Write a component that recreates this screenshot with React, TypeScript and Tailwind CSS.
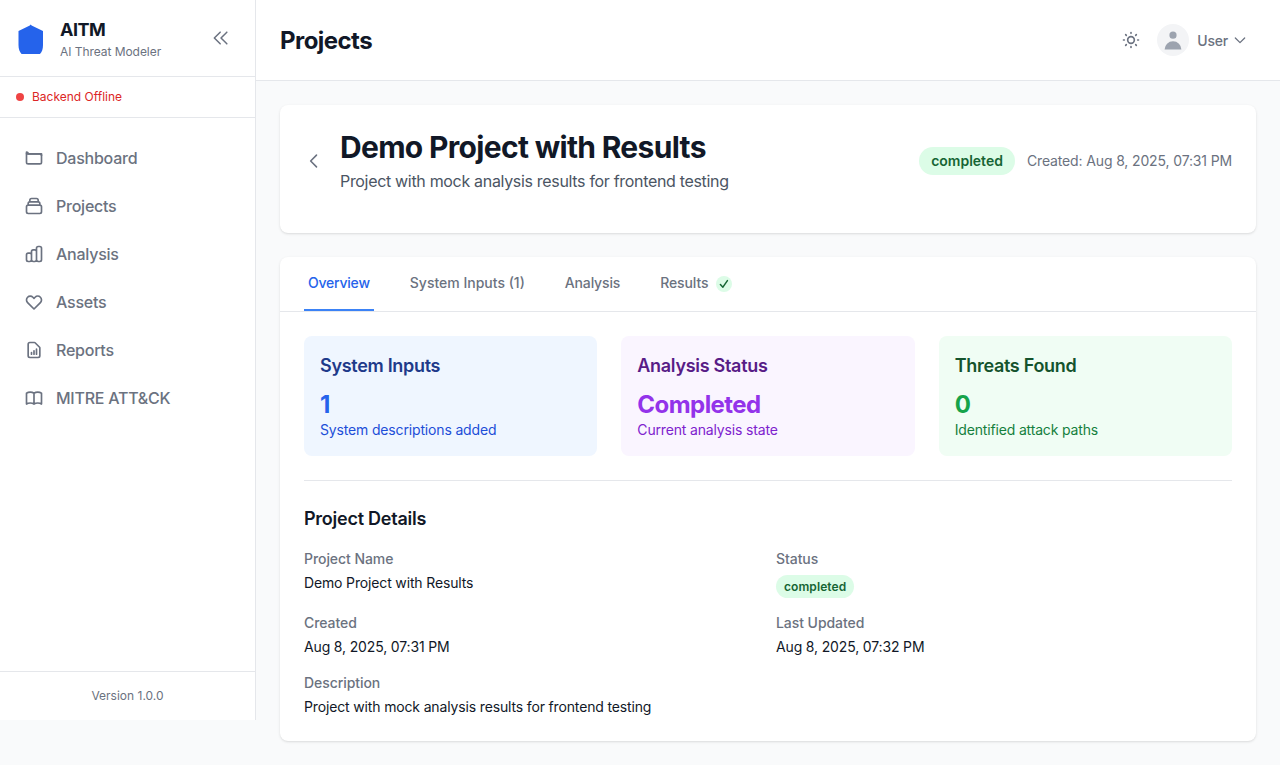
import React from "react";

type IconProps = { d: string | string[]; className?: string; strokeWidth?: number };

function Icon({ d, className = "size-5", strokeWidth = 2 }: IconProps) {
  const paths = Array.isArray(d) ? d : [d];
  return (
    <svg className={className} fill="none" stroke="currentColor" viewBox="0 0 24 24" strokeWidth={strokeWidth} strokeLinecap="round" strokeLinejoin="round">
      {paths.map((p) => (
        <path key={p} d={p} />
      ))}
    </svg>
  );
}

const nav: { label: string; d: string | string[] }[] = [
  {
    label: "Dashboard",
    d: ["M3 7v10a2 2 0 002 2h14a2 2 0 002-2V9a2 2 0 00-2-2H5a2 2 0 00-2-2z", "M3 7h18v2"],
  },
  {
    label: "Projects",
    d: "M19 11H5m14 0a2 2 0 012 2v6a2 2 0 01-2 2H5a2 2 0 01-2-2v-6a2 2 0 012-2m14 0V9a2 2 0 00-2-2M5 11V9a2 2 0 012-2m0 0V5a2 2 0 012-2h6a2 2 0 012 2v2M7 7h10",
  },
  {
    label: "Analysis",
    d: "M9 19v-6a2 2 0 00-2-2H5a2 2 0 00-2 2v6a2 2 0 002 2h2a2 2 0 002-2zm0 0V9a2 2 0 012-2h2a2 2 0 012 2v10m-6 0a2 2 0 002 2h2a2 2 0 002-2m0 0V5a2 2 0 012-2h2a2 2 0 012 2v14a2 2 0 01-2 2h-2a2 2 0 01-2-2z",
  },
  {
    label: "Assets",
    d: "M4.318 6.318a4.5 4.5 0 000 6.364L12 20.364l7.682-7.682a4.5 4.5 0 00-6.364-6.364L12 7.636l-1.318-1.318a4.5 4.5 0 00-6.364 0z",
  },
  {
    label: "Reports",
    d: "M9 17v-2m3 2v-4m3 4v-6m2 10H7a2 2 0 01-2-2V5a2 2 0 012-2h5.586a1 1 0 01.707.293l5.414 5.414a1 1 0 01.293.707V19a2 2 0 01-2 2z",
  },
  {
    label: "MITRE ATT&CK",
    d: "M12 6.253v13m0-13C10.832 5.477 9.246 5 7.5 5S4.168 5.477 3 6.253v13C4.168 18.477 5.754 18 7.5 18s3.332.477 4.5 1.253m0-13C13.168 5.477 14.754 5 16.5 5c1.747 0 3.332.477 4.5 1.253v13C19.832 18.477 18.247 18 16.5 18c-1.746 0-3.332.477-4.5 1.253",
  },
];

function Sidebar() {
  return (
    <aside className="flex h-[720px] w-64 shrink-0 flex-col border-r border-[#e5e7eb] bg-white">
      <div className="flex h-[77px] items-center justify-between border-b border-[#e5e7eb] pr-6 pl-4">
        <div className="flex items-center">
          <svg className="mt-1 mr-3 size-8 text-[#2563eb]" viewBox="0 0 32 32" fill="currentColor">
            <path d="M14.7 0.6 L15.6 1.4 L27 7 V21 C27 25 26 28 24 30 H5.6 C3.6 28 2.5 25 2.5 21 V7 L13.8 1.4 Z" />
          </svg>
          <div>
            <h1 className="text-lg leading-[28px] font-bold tracking-[-0.5px] text-[#111827]">AITM</h1>
            <p className="text-xs tracking-[-0.05px] text-[#6b7280]">AI Threat Modeler</p>
          </div>
        </div>
        <button className="text-[#6b7280]">
          <Icon strokeWidth={1.8} className="size-5" d="M11 19l-7-7 7-7m8 14l-7-7 7-7" />
        </button>
      </div>
      <div className="flex h-[41px] items-center gap-2 border-b border-[#e5e7eb] px-4">
        <span className="size-2 rounded-full bg-[#ef4444]" />
        <span className="text-xs text-[#dc2626]">Backend Offline</span>
      </div>
      <nav className="flex flex-1 flex-col gap-2 px-4 pt-5">
        {nav.map((n) => (
          <a key={n.label} className="flex h-10 items-center gap-3 px-2 font-medium tracking-[-0.24px] text-[#6b7280]">
            <Icon d={n.d} />
            {n.label}
          </a>
        ))}
      </nav>
      <div className="border-t border-[#e5e7eb] p-4 text-center text-xs text-[#6b7280]">Version 1.0.0</div>
    </aside>
  );
}

function Header() {
  return (
    <header className="flex h-[81px] items-center justify-between border-b border-[#e5e7eb] bg-white pr-8 pl-6">
      <h1 className="pt-0.5 text-2xl font-bold tracking-[-0.55px] text-[#111827]">Projects</h1>
      <div className="flex items-center text-[#6b7280]">
        <Icon className="mr-4 size-5" d="M12 3v1m0 16v1m9-9h-1M4 12H3m15.364 6.364l-.707-.707M6.343 6.343l-.707-.707m12.728 0l-.707.707M6.343 17.657l-.707.707M16 12a4 4 0 11-8 0 4 4 0 018 0z" />
        <span className="mr-2 flex size-8 items-center justify-center rounded-full bg-[#f3f4f6]">
          <svg className="size-6 text-[#9ca3af]" viewBox="0 0 20 20" fill="currentColor">
            <path fillRule="evenodd" d="M10 9a3 3 0 100-6 3 3 0 000 6zm-7 9a7 7 0 1114 0H3z" />
          </svg>
        </span>
        <span className="mr-1 pt-0.5 text-sm font-medium tracking-[-0.2px]">User</span>
        <Icon className="size-4" strokeWidth={1.9} d="M19 9l-7 7-7-7" />
      </div>
    </header>
  );
}

const stats = [
  { title: "System Inputs", value: "1", note: "System descriptions added", box: "bg-[#eff6ff]", t: "text-[#1e3a8a]", v: "text-[#2563eb]", n: "text-[#1d4ed8]" },
  { title: "Analysis Status", value: "Completed", note: "Current analysis state", box: "bg-[#faf5ff]", t: "text-[#581c87]", v: "text-[#9333ea]", n: "text-[#7e22ce]" },
  { title: "Threats Found", value: "0", note: "Identified attack paths", box: "bg-[#f0fdf4]", t: "text-[#14532d]", v: "text-[#16a34a]", n: "text-[#15803d]" },
];

function Field({ label, children }: { label: string; children: React.ReactNode }) {
  return (
    <div>
      <dt className="text-sm font-medium tracking-[-0.06px] text-[#6b7280]">{label}</dt>
      <dd className="mt-1 text-sm tracking-[-0.15px] text-[#111827]">{children}</dd>
    </div>
  );
}

export default function App() {
  return (
    <div className="flex min-h-[765px] bg-[#f9fafb] font-['Inter',sans-serif]">
      <Sidebar />
      <div className="min-w-0 flex-1">
        <Header />
        <main className="flex flex-col gap-6 p-6">
          <section className="h-32 rounded-lg bg-white p-6 shadow-sm">
            <div className="flex h-16 items-center justify-between">
              <div className="flex items-center">
                <button className="mr-4 text-[#6b7280]">
                  <Icon className="size-5" strokeWidth={1.9} d="M15 19l-7-7 7-7" />
                </button>
                <div>
                  <h2 className="text-3xl font-bold tracking-[-0.68px] text-[#111827]">Demo Project with Results</h2>
                  <p className="mt-1 tracking-[-0.32px] text-[#4b5563]">Project with mock analysis results for frontend testing</p>
                </div>
              </div>
              <div className="flex items-center gap-3 text-sm">
                <span className="rounded-full bg-[#dcfce7] px-3 py-1 font-semibold text-[#166534]">completed</span>
                <span className="tracking-[-0.14px] text-[#6b7280]">Created: Aug 8, 2025, 07:31 PM</span>
              </div>
            </div>
          </section>
          <section className="rounded-lg bg-white shadow-sm">
            <nav className="flex h-[55px] gap-8 border-b border-[#e5e7eb] px-6 text-sm font-medium text-[#6b7280]">
              <a className="border-b-2 border-[#3b82f6] px-1 pt-4 tracking-[-0.22px] text-[#2563eb]">Overview</a>
              <a className="px-1 pt-4">System Inputs (1)</a>
              <a className="px-1 pt-4 tracking-[-0.15px]">Analysis</a>
              <a className="flex items-start gap-2 px-1 pt-4 tracking-[-0.1px]">
                Results
                <span className="mt-[3px] flex size-4 items-center justify-center rounded-full bg-[#dcfce7] text-[#166534]">
                  <svg className="size-3" viewBox="0 0 12 12" fill="none" stroke="currentColor" strokeWidth="1.5" strokeLinecap="round" strokeLinejoin="round">
                    <path d="M2.4 6.6 L4.9 9.2 L9.4 2.6" />
                  </svg>
                </span>
              </a>
            </nav>
            <div className="p-6">
              <div className="grid grid-cols-3 gap-6">
                {stats.map((s) => (
                  <div key={s.title} className={`h-[120px] rounded-lg p-4 ${s.box}`}>
                    <h3 className={`mb-2 text-lg leading-7 font-semibold tracking-[-0.3px] ${s.t}`}>{s.title}</h3>
                    <p className={`h-8 text-2xl leading-[34px] font-bold tracking-[-0.55px] ${s.v}`}>{s.value}</p>
                    <p className={`text-sm tracking-[-0.16px] ${s.n}`}>{s.note}</p>
                  </div>
                ))}
              </div>
              <div className="mt-6 border-t border-[#e5e7eb] pt-6">
                <h3 className="mb-4 text-lg leading-7 font-semibold tracking-[-0.25px] text-[#111827]">Project Details</h3>
                <dl className="grid grid-cols-2 gap-x-4 gap-y-4">
                  <Field label="Project Name">Demo Project with Results</Field>
                  <Field label="Status">
                    <span className="flex h-6 items-start pt-0.5">
                      <span className="h-[23px] rounded-full bg-[#dcfce7] px-2 text-xs leading-[23px] font-semibold tracking-[0.08px] text-[#166534]">completed</span>
                    </span>
                  </Field>
                  <Field label="Created">Aug 8, 2025, 07:31 PM</Field>
                  <Field label="Last Updated">Aug 8, 2025, 07:32 PM</Field>
                  <Field label="Description">Project with mock analysis results for frontend testing</Field>
                </dl>
              </div>
            </div>
          </section>
        </main>
      </div>
    </div>
  );
}
